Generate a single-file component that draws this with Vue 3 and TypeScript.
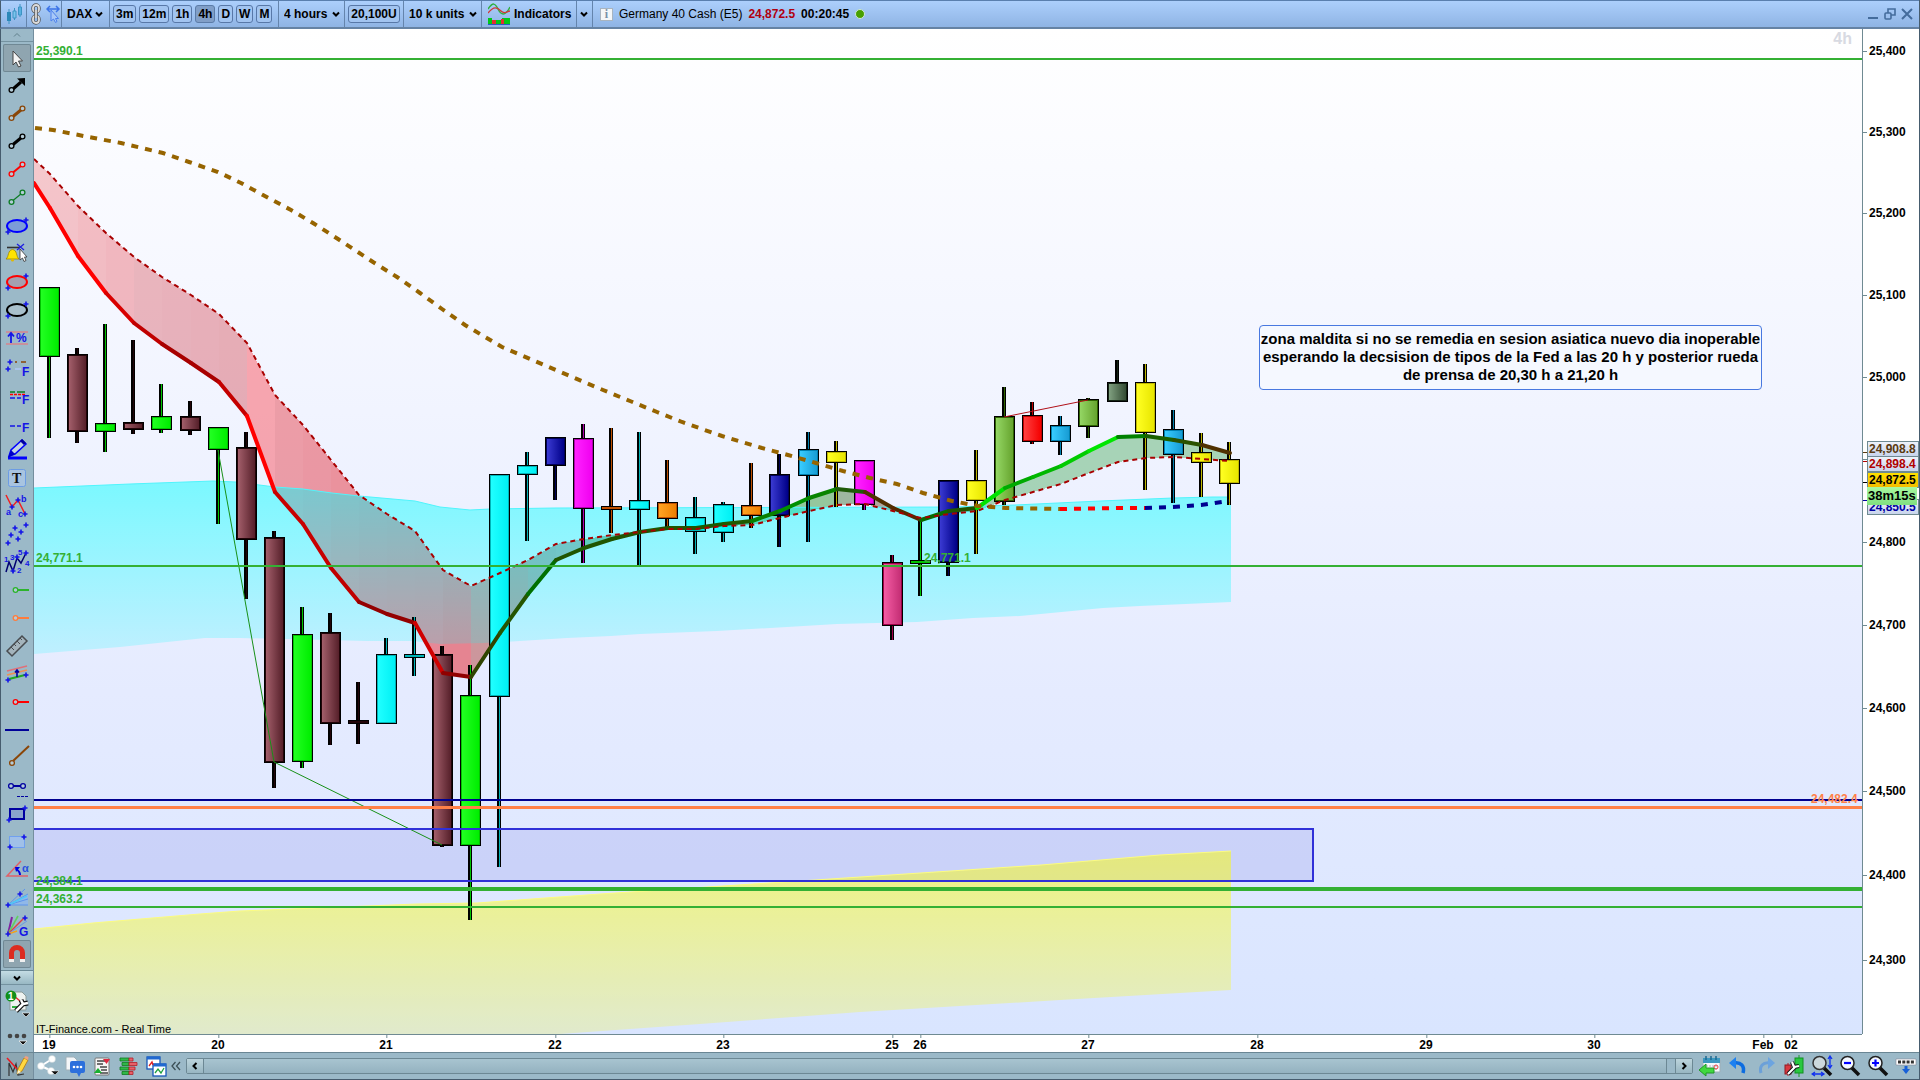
<script setup lang="ts">
import { ref } from 'vue'

type Point = [number, number]
interface Candle { kind: string; high: number; low: number; top: number; bottom: number; x: number }

/* Plot coordinates of the drawing surface */
const left = 34
const top = 29
const width = 1828
const height = 1005
const px = (x: number) => ((x - left) / width) * 100 + '%'
const py = (y: number) => ((y - top) / height) * 100 + '%'

const barX = (i: number) => Math.floor(49.6 + (i * 309) / 11)
const priceY = (p: number) => 51 + 20523 * Math.log(25400 / p)

const palette: Record<string, [string, string, string]> = {
  green: ['#22ff22', '#00ee00', '#00c400'],
  brown: ['#a25e6a', '#56202a', '#220408'],
  cyan: ['#20ffff', '#00f0f4', '#00b4b8'],
  blue: ['#3a3ad2', '#000088', '#000058'],
  magenta: ['#ff22ff', '#f000f0', '#b000b0'],
  orange: ['#ffa424', '#ee8000', '#c05000'],
  rust: ['#c85400', '#c05000', '#c05000'],
  sky: ['#38ccff', '#189cd4', '#0080b0'],
  yellow: ['#ffff22', '#e8e600', '#c0b800'],
  pink: ['#f45ca4', '#c42e74', '#a00048'],
  olive: ['#94d664', '#66a42e', '#2e6400'],
  red: ['#ff4040', '#f40000', '#c00000'],
  moss: ['#80a080', '#344c34', '#142414'],
}

const rows: [string, number, number, number, number][] = [
  ['green', 287, 438, 287, 357], ['brown', 348, 443, 354, 432], ['green', 324, 452, 423, 432],
  ['brown', 340, 434, 422, 430], ['green', 384, 433, 416, 430], ['brown', 401, 435, 416, 431],
  ['green', 427, 524, 427, 450], ['brown', 432, 599, 447, 540], ['brown', 531, 788, 537, 763],
  ['green', 607, 768, 634, 762], ['brown', 613, 745, 632, 724], ['brown', 682, 744, 720, 724],
  ['cyan', 638, 724, 654, 724], ['cyan', 617, 676, 654, 658], ['brown', 646, 847, 654, 846],
  ['green', 665, 920, 695, 846], ['cyan', 474, 867, 474, 697], ['cyan', 452, 541, 465, 475],
  ['blue', 437, 500, 437, 466], ['magenta', 424, 563, 438, 509], ['rust', 428, 533, 506, 510],
  ['cyan', 432, 565, 500, 510], ['orange', 460, 528, 502, 519], ['cyan', 497, 554, 517, 532],
  ['cyan', 502, 542, 504, 533], ['orange', 463, 528, 505, 516], ['blue', 454, 547, 474, 516],
  ['sky', 432, 542, 449, 476], ['yellow', 441, 507, 451, 463], ['magenta', 460, 510, 460, 505],
  ['pink', 555, 640, 562, 626], ['green', 520, 596, 560, 564], ['blue', 480, 576, 480, 563],
  ['yellow', 450, 554, 480, 501], ['olive', 387, 505, 416, 502], ['red', 402, 444, 415, 442],
  ['sky', 416, 455, 425, 442], ['olive', 398, 438, 399, 427], ['moss', 360, 402, 382, 402],
  ['yellow', 364, 490, 382, 433], ['sky', 410, 503, 429, 455], ['yellow', 433, 497, 452, 463],
  ['yellow', 442, 505, 459, 484],
]
const candles: Candle[] = rows.map(([kind, high, low, t, bottom], i) => ({
  kind, high, low, top: t, bottom, x: barX(i),
}))

/* Fast average: value at the left edge, then one per bar */
const fastY = [183, 208, 256, 293, 323, 344, 363, 382, 416, 492, 524, 568, 602, 614, 623, 673, 677, 633, 594,
  560, 548, 539, 532, 528, 528, 524, 521, 511, 498, 489, 492, 508, 520, 511, 508, 488, 477, 466, 451, 437, 436,
  440, 445, 453]
const slowY = [159, 174, 206, 233, 257, 277, 295, 314, 343, 395, 425, 460, 495, 514, 531, 570, 586, 573, 560,
  544, 539, 535, 532, 529, 529, 526, 525, 518, 511, 505, 504, 511, 518, 514, 511, 500, 492, 484, 473, 462, 458,
  457, 459, 461]
const tone = ['#f00', '#f00', '#f00', '#d80000', '#c00000', '#a80000', '#a80000', '#c40000', '#f00', '#c80000',
  '#c80000', '#c00000', '#940000', '#940000', '#d00000', '#900000', '#304400', '#255500', '#007000', '#205500',
  '#205500', '#205500', '#205500', '#205500', '#185c00', '#205a00', '#088000', '#009000', '#088400', '#1e5a08',
  '#503000', '#552800', '#086c00', '#205500', '#00e200', '#00aa00', '#00b800', '#00cc00', '#00e600', '#008000',
  '#1a6000', '#2a5200', '#503000']
const midX = (i: number) => (i === 0 ? left : barX(i - 1) + 1)
const segments = tone.map((color, i) => {
  const x1 = midX(i)
  const x2 = midX(i + 1)
  const rising = i > 33
  let fill = color
  if (i < 16) fill = '#e41018'
  if (i > 3 && i < 8) fill = '#cc1420'
  if (i === 8) fill = '#ff0c14'
  if (i === 16) fill = '#b03830'
  if (i === 17) fill = '#803828'
  if (i > 17 && i < 20) fill = '#604030'
  if (rising) fill = '#008c10'
  return {
    color, fill, x1, x2, y1: fastY[i], y2: fastY[i + 1],
    opacity: rising ? 0.3 : Math.min(0.48, 0.22 + ((fastY[i] - 180) / 500) * 0.26),
    area: `${x1},${fastY[i]} ${x2},${fastY[i + 1]} ${x2},${slowY[i + 1]} ${x1},${slowY[i]}`,
  }
})
const slowLine = slowY.map((y, i) => `${midX(i)},${y}`).join(' ')

const join = (pts: Point[]) => pts.map((p) => p.join(',')).join(' ')
const longAvg: Point[] = [[35, 128], [53, 130], [94, 138], [121, 143], [163, 153], [189, 162], [218, 172],
  [241, 183], [263, 195], [291, 210], [313, 223], [338, 239], [373, 262], [397, 277], [420, 293], [442, 309],
  [465, 325], [502, 347], [558, 371], [603, 390], [630, 401], [657, 412], [682, 422], [722, 436], [762, 448],
  [788, 455], [816, 463], [843, 471], [870, 478], [897, 484], [923, 493], [952, 501], [978, 506], [1006, 508],
  [1060, 509]]
const longRed: Point[] = [[1060, 509], [1117, 508], [1145, 508]]
const longBlue: Point[] = [[1145, 508], [1173, 507], [1201, 505], [1229, 501]]

const cyanTop: Point[] = [[34, 488], [130, 484], [213, 481], [236, 482], [275, 487], [303, 489], [332, 493],
  [359, 496], [415, 501], [440, 507], [470, 510], [490, 509], [555, 508], [953, 507], [1015, 505], [1100, 501],
  [1173, 498], [1213, 497], [1231, 497]]
const cyanBottom: Point[] = [[1231, 602], [1140, 606], [1103, 608], [1020, 616], [973, 618], [917, 622],
  [837, 624], [717, 631], [640, 634], [611, 636], [567, 638], [520, 641], [483, 643], [440, 644], [413, 641],
  [367, 641], [240, 638], [205, 638], [120, 647], [34, 654]]
const yellowTop: Point[] = [[34, 929], [93, 923], [200, 914], [240, 911], [317, 908], [417, 904], [477, 903],
  [600, 894], [800, 881], [1041, 865], [1160, 855], [1231, 851]]
const yellowBottom: Point[] = [[1231, 990], [1060, 1000], [860, 1012], [700, 1024], [560, 1034], [34, 1034]]

const levels = [
  { y: 59, w: 2, c: '#34b034' },
  { y: 566, w: 2, c: '#34b034' },
  { y: 800, w: 2, c: '#000090' },
  { y: 807.5, w: 3, c: '#ff8048' },
  { y: 889, w: 4, c: '#34b034' },
  { y: 907, w: 2, c: '#34b034' },
]
const levelLabels = [
  { t: '25,390.1', x: 36, y: 51, c: '#34b034' },
  { t: '24,771.1', x: 36, y: 558, c: '#34b034' },
  { t: '24,771.1', x: 924, y: 558, c: '#34b034' },
  { t: '24,384.1', x: 36, y: 881, c: '#34b034' },
  { t: '24,363.2', x: 36, y: 899, c: '#34b034' },
  { t: '24,482.4', x: 1811, y: 799, c: '#ff8048' },
]

const prices = [25400, 25300, 25200, 25100, 25000, 24800, 24700, 24600, 24500, 24400, 24300]
const marks = [
  { y: 452, c: '#5a3a10' }, { y: 459, c: '#6f8a92' }, { y: 461, c: '#b00000' },
  { y: 482, c: '#000000' }, { y: 500, c: '#0000a0' },
]
const tags = [
  { t: '24,850.5', y: 499, k: 'navy' },
  { t: '24,908.8', y: 441, k: 'sepia' },
  { t: '24,898.4', y: 456, k: 'crimson' },
  { t: '24,872.5', y: 472, k: 'last' },
  { t: '38m15s', y: 487, k: 'timer' },
]
const dates: [string, number][] = [['19', 49], ['20', 218], ['21', 386], ['22', 555], ['23', 723], ['25', 892],
  ['26', 920], ['27', 1088], ['28', 1257], ['29', 1426], ['30', 1594], ['Feb', 1763], ['02', 1791]]

const frames = ['3m', '12m', '1h', '4h', 'D', 'W', 'M']
const frame = ref('4h')

/* Drawing tools, each on a 28 × 28 grid */
const plus = (x: number, y: number, c = '#1414e6') =>
  `<path d="M${x - 2.5} ${y}h5M${x} ${y - 2.5}v5" stroke="${c}" stroke-width="1.6" fill="none"/>`
const link = (c: string, w: number) =>
  `<path d="M10 16.5L18.5 9.5" stroke="${c}" stroke-width="${w}"/><g fill="#b4ccd8" stroke="${c}" stroke-width="1.3"><circle cx="8.5" cy="18" r="2.4"/><circle cx="19.5" cy="8.5" r="2.4"/></g>`
const oval = (c: string, f: string) =>
  `<ellipse cx="14" cy="14" rx="10" ry="6" fill="${f}" stroke="${c}" stroke-width="2"/>${plus(23, 8)}${plus(5, 20)}`
const pin = (c: string) =>
  `<path d="M14.5 14H26" stroke="${c}" stroke-width="2"/><circle cx="12.5" cy="14" r="2.3" fill="#b4ccd8" stroke="${c}" stroke-width="1.3"/>`
const glyph = (x: number, y: number, s: number, t: string, c = '#1414e6') =>
  `<text x="${x}" y="${y}" font-size="${s}" font-weight="700" fill="${c}" font-family="Liberation Sans, Arial, sans-serif">${t}</text>`

const tools: { name: string; art: string }[] = [
  { name: 'Select', art: '<path d="M10 7V21L13 18L15.5 23L18 22L15.5 17H19.5Z" fill="#f4f4f4" stroke="#444" />' },
  { name: 'Arrow', art: '<path d="M10 17L18 10" stroke="#000" stroke-width="3"/><path d="M22 6V14L14 6.500Z" fill="#000"/><circle cx="8.5" cy="18" r="2.4" fill="#b4ccd8" stroke="#000" stroke-width="1.3"/>' },
  { name: 'Segment', art: link('#8a4608', 3) },
  { name: 'Black segment', art: link('#000', 3) },
  { name: 'Red segment', art: link('#f00', 2) },
  { name: 'Green segment', art: link('#0c7c24', 1.2) },
  { name: 'Blue ellipse', art: oval('#00f', '#7c9cd8') },
  { name: 'Alert', art: `<path d="M4 7.500H17" stroke="#333" stroke-width="1.600"/><path d="M14 4L21 10M21 4L14 10" stroke="#2020e0" stroke-width="1.300"/><path d="M3 19C6 17 4.500 10 9.500 9.500C14.500 10 13 17 16 19Z" fill="#ffe400" stroke="#a08800" stroke-width=".8"/><circle cx="9.500" cy="20" r="1.600" fill="#e0b800"/><path d="M17 9V20L19.500 18L21 21.500L23 20.500L21.500 17H24Z" fill="#fff" stroke="#333" stroke-width=".8"/>` },
  { name: 'Red ellipse', art: oval('#f00', '#a4a0b0') },
  { name: 'Black ellipse', art: oval('#000', '#a8c0cc') },
  { name: 'Percent change', art: `<path d="M3 8H25M3 20H25" stroke="#d8848c" stroke-width="1.500"/><path d="M8 19V10M5 12.500L8 9L11 12.500" stroke="#1414e6" stroke-width="1.800" fill="none"/>${glyph(13, 18, 12, '%')}` },
  { name: 'Fibonacci grid', art: `${plus(7, 10)}<path d="M12 10h2M18 10h5" stroke="#8a4608" stroke-width="1.500"/>${plus(5, 17)}<path d="M12 17h6" stroke="#b0c8f4" stroke-width="1.500"/>${glyph(19, 24, 12, 'F')}` },
  { name: 'Fibonacci levels', art: `<path d="M7 12h5M14 12h8" stroke="#0c7c24" stroke-width="1.500"/><path d="M7 14.500h15" stroke="#f00" stroke-width="1.500" stroke-dasharray="3 1"/><path d="M7 18h5M14 18h4" stroke="#1414e6" stroke-width="1.500"/>${glyph(19, 24, 12, 'F')}` },
  { name: 'Fibonacci line', art: `<path d="M7 18h5M14 18h4" stroke="#1414e6" stroke-width="1.500"/>${glyph(19, 24, 12, 'F')}` },
  { name: 'Freehand', art: '<path d="M5 22H24" stroke="#00f" stroke-width="3"/><path d="M6 20L8 14L19 4L23 8L12 18Z" fill="#c4d4e4" stroke="#00f" stroke-width="1.500"/><path d="M18 4L22 8" stroke="#0000a0" stroke-width="3"/><path d="M5 22L8 14L12 18Z" fill="#0000c8"/>' },
  { name: 'Text', art: `<rect x="5.500" y="5.500" width="17" height="17" rx="2" fill="#a8c4e0" stroke="#6c9ce4"/><text x="9" y="19" font-size="14" font-weight="700" fill="#111" font-family="Liberation Serif, serif">T</text>` },
  { name: 'ABC wave', art: `<path d="M3 3L9 15L15 8L22 22" stroke="#f02020" stroke-width="1.500" fill="none"/>${plus(9, 15)}${plus(15, 8)}${plus(22, 22)}${glyph(3, 23, 9, 'a')}${glyph(18, 10, 9, 'b')}${glyph(15, 25, 9, 'c')}` },
  { name: 'Polyline', art: `<path d="M5 22L8 15L15 19L12 7L18 11L23 4" stroke="#88b0e8" fill="none"/>${plus(5, 23)}${plus(8, 15)}${plus(15, 19)}${plus(12, 8)}${plus(18, 12)}${plus(23, 5)}` },
  { name: 'Elliott wave', art: `<path d="M3 24L6 14L10 23L14 10L18 15L23 5" stroke="#000070" stroke-width="1.500" fill="none"/>${plus(10, 23)}${plus(14, 9)}${plus(23, 5)}${glyph(1, 14, 8, '1')}${glyph(7, 12, 8, '3')}${glyph(15, 7, 8, '5')}${glyph(22, 18, 8, '4')}${glyph(14, 25, 8, '2')}` },
  { name: 'Green ray', art: pin('#2cb42c') },
  { name: 'Orange ray', art: pin('#ff7c3c') },
  { name: 'Ruler', art: '<path d="M4 19L19 4L24 9L9 24Z" fill="#a4b4bc" stroke="#484c50" stroke-width="1.500"/><path d="M8 15l3 3M11 12l2 2M14 9l3 3M17 6l2 2" stroke="#484c50"/>' },
  { name: 'Channel', art: `<path d="M4 11L24 6" stroke="#e07078" stroke-width="1.500"/><path d="M4 15L24 10" stroke="#f09050" stroke-width="1.500"/><path d="M6 19L22 15" stroke="#20a820" stroke-width="2"/>${plus(5, 20)}${plus(23, 15)}<path d="M14 17V11M12 12.500L14 10L16 12.500" stroke="#0000a0" stroke-width="1.600" fill="none"/>` },
  { name: 'Red ray', art: pin('#f00') },
  { name: 'Horizontal line', art: '<path d="M2 14H26" stroke="#000098" stroke-width="2"/>' },
  { name: 'Brown ray', art: '<path d="M10 17L26 2" stroke="#8a4608" stroke-width="2"/><circle cx="9" cy="19" r="2.400" fill="#b4ccd8" stroke="#8a4608" stroke-width="1.300"/>' },
  { name: 'Segment style', art: '<path d="M10 14H18" stroke="#0000a0" stroke-width="2"/><g fill="#b4ccd8" stroke="#0000a0" stroke-width="1.300"><circle cx="8" cy="14" r="2.400"/><circle cx="20" cy="14" r="2.400"/></g><path d="M14 24.500h3M18 24.500h3M22 24.500h3" stroke="#0000a0"/>' },
  { name: 'Rectangle', art: `<rect x="7" y="9" width="14" height="10" fill="#8aa4cc" stroke="#0000a0" stroke-width="2"/>${plus(22, 8)}${plus(6, 20)}` },
  { name: 'Light rectangle', art: `<rect x="6.500" y="8.500" width="15" height="11" fill="#a0c0e8" stroke="#70a0f0"/>${plus(21, 9)}${plus(7, 19)}` },
  { name: 'Angle', art: `<path d="M18 5L4 20H25" stroke="#e06068" stroke-width="1.500" fill="none"/><path d="M17 19C17 16 15.500 14.500 13 13" stroke="#0000e0" stroke-width="2" fill="none"/><path d="M12 11L17 11L13 16Z" fill="#0000e0"/>${glyph(19, 16, 11, 'α', '#2850e0')}` },
  { name: 'Fan', art: `<path d="M5 21L25 10V21Z" fill="#90b8e8"/><path d="M5 21L22 5M5 21L25 10M5 21L25 15M5 21H25" stroke="#5c94ec"/><path d="M5 21L24 12" stroke="#50c8f8" stroke-width="1.500"/>${plus(5, 21)}${plus(17, 10)}` },
  { name: 'Gann fan', art: `<path d="M5 22L9 5" stroke="#8020a0" stroke-width="2"/><path d="M5 22L15 4" stroke="#60d060" stroke-width="1.600"/><path d="M5 22L21 6" stroke="#e04040" stroke-width="1.500"/><path d="M5 22L24 9" stroke="#6898e8"/><path d="M5 22L14 19" stroke="#f0a020" stroke-width="1.500"/>${plus(5, 22)}${plus(22, 6)}${glyph(16, 24, 12, 'G')}` },
  { name: 'Magnet', art: '<path d="M8.500 19V13A5.500 5.500 0 0 1 19.500 13V19" stroke="#dc2c20" stroke-width="5" fill="none"/><path d="M6 19h5v3h-5zM17 19h5v3h-5z" fill="#f0f0f0"/>' },
]
</script>

<template>
  <div class="app">
    <header class="bar">
      <button class="cell logo" aria-label="Chart menu">
        <svg width="18" height="20" viewBox="0 0 18 20">
          <path d="M3 5v15M8.500 4v12M14 0v13" stroke="#3c94c4" />
          <path d="M1 8h4v9H1z" fill="#2c88b8" /><path d="M7 7h3v7H7z" fill="#7cc4ec" stroke="#3c94c4" /><path d="M12.500 3h3v8h-3z" fill="#58b0e0" stroke="#3c94c4" />
        </svg>
      </button>
      <div class="cell links">
        <button class="bare" aria-label="Link charts">
          <svg width="10" height="22" viewBox="0 0 10 22" fill="none">
            <g stroke="#555" stroke-width="3.400"><rect x="2" y="2" width="6" height="7" rx="3" /><rect x="2" y="13" width="6" height="7" rx="3" /></g>
            <g stroke="#ddd" stroke-width="1.800"><rect x="2" y="2" width="6" height="7" rx="3" /><rect x="2" y="13" width="6" height="7" rx="3" /></g>
            <path d="M5 7v8" stroke="#555" stroke-width="3.400" /><path d="M5 7v8" stroke="#eee" stroke-width="1.600" />
          </svg>
        </button>
        <button class="bare" aria-label="Move chart">
          <svg width="15" height="18" viewBox="0 0 15 18">
            <path d="M1 4h12M4 1L1 4l3 3M10 1l3 3-3 3" stroke="#3c74e8" stroke-width="1.500" fill="none" />
            <path d="M5 5v11l2.500-2 2 3.500 1.500-1-1.500-3h3z" fill="#a8c8f8" stroke="#4c80ec" />
          </svg>
        </button>
      </div>
      <label class="cell pick dax">
        <select aria-label="Instrument"><option>DAX</option></select>
        <svg class="chev" viewBox="0 0 8 6"><path d="M1 1.500L4 4.500 7 1.500" /></svg>
      </label>
      <div class="cell frames">
        <button v-for="f in frames" :key="f" class="key" :class="{ on: f === frame }" @click="frame = f">{{ f }}</button>
      </div>
      <label class="cell pick hours">
        <select aria-label="Time frame"><option>4 hours</option></select>
        <svg class="chev" viewBox="0 0 8 6"><path d="M1 1.500L4 4.500 7 1.500" /></svg>
      </label>
      <div class="cell units"><button class="key">20,100U</button></div>
      <label class="cell pick hist">
        <select aria-label="History"><option>10 k units</option></select>
        <svg class="chev" viewBox="0 0 8 6"><path d="M1 1.500L4 4.500 7 1.500" /></svg>
      </label>
      <button class="cell ind">
        <svg width="22" height="22" viewBox="0 0 22 22">
          <path d="M0 6C5-1 7 0 10 6S17 14 22 4" stroke="#30b040" stroke-width="1.500" fill="none" />
          <path d="M0 10C6 3 9 4 13 8S19 8 22 8" stroke="#d03838" stroke-width="1.300" fill="none" />
          <path d="M0 15h4v6H0zM8 17h5v4H8zM14 15h8v6h-8z" fill="#00c818" /><path d="M4 17h4v4H4zM13 16h3v5h-3z" fill="#e03030" /><path d="M0 21.500h22" stroke="#2858c8" />
        </svg>
        <span>Indicators</span>
      </button>
      <button class="cell more" aria-label="More indicators">
        <svg class="chev" viewBox="0 0 8 6"><path d="M1 1.500L4 4.500 7 1.500" /></svg>
      </button>
      <div class="title">
        <span class="info">i</span>
        <span>Germany 40 Cash (E5)</span>
        <b class="quote">24,872.5</b>
        <b>00:20:45</b>
        <i class="dot"></i>
      </div>
      <div class="win">
        <button class="bare" aria-label="Minimize"><svg width="12" height="12" viewBox="0 0 12 12"><path d="M1 10h10" stroke="#446c9c" stroke-width="2" /></svg></button>
        <button class="bare" aria-label="Restore"><svg width="12" height="12" viewBox="0 0 12 12" fill="none" stroke="#446c9c" stroke-width="1.600"><rect x="1" y="5" width="6" height="6" rx="1" /><path d="M4 5V1h7v6H7" /></svg></button>
        <button class="bare" aria-label="Close"><svg width="12" height="12" viewBox="0 0 12 12"><path d="M1 1l10 10M11 1L1 11" stroke="#446c9c" stroke-width="2" /></svg></button>
      </div>
    </header>

    <main class="body">
      <nav class="side">
        <button class="fold up" aria-label="Scroll up"><svg class="chev" viewBox="0 0 8 6"><path d="M1 4.500L4 1.500 7 4.500" /></svg></button>
        <div class="tools">
          <button v-for="(t, i) in tools" :key="t.name" class="tool" :class="{ on: i === 0 || i === 32 }" :aria-label="t.name">
            <svg width="28" height="28" viewBox="0 0 28 28" v-html="t.art"></svg>
          </button>
        </div>
        <button class="fold down" aria-label="Scroll down"><svg class="chev" viewBox="0 0 8 6"><path d="M1 1.500L4 4.500 7 1.500" /></svg></button>
        <button class="tool tall" aria-label="Object settings">
          <svg width="28" height="30" viewBox="0 0 28 30">
            <path d="M7 4h12l4 4v14H7z" fill="#eef2f0" stroke="#8a9a98" /><path d="M9 19h8" stroke="#30b040" stroke-width="2" /><path d="M11 8l6 5" stroke="#e03030" stroke-width="1.500" />
            <path d="M13 23l7-7M18 12l2 4 5-1" stroke="#111" stroke-width="5" fill="none" /><path d="M13 23l7-7M18 12l2 4 5-1" stroke="#fff" stroke-width="2.500" fill="none" />
            <circle cx="8" cy="8" r="5.500" fill="#109018" /><text x="5" y="12" font-size="10" font-weight="700" fill="#fff">1</text>
            <path d="M19 25h8l-4 4z" fill="#111" stroke="#fff" stroke-width=".6" />
          </svg>
        </button>
        <button class="tool tall" aria-label="More tools">
          <svg width="28" height="30" viewBox="0 0 28 30"><g fill="#444"><circle cx="7" cy="15" r="2.300" /><circle cx="14" cy="15" r="2.300" /><circle cx="21" cy="15" r="2.300" /></g><path d="M16 20h8l-4 4z" fill="#111" stroke="#fff" stroke-width=".7" /></svg>
        </button>
      </nav>

      <section class="chart">
        <div class="plot">
          <svg class="canvas" :viewBox="`${left} ${top} ${width} ${height}`" preserveAspectRatio="none">
            <defs>
              <linearGradient v-for="(c, k) in palette" :id="'c-' + k" :key="k" x1="0" y1="0" x2="1" y2="0">
                <stop offset="0" :stop-color="c[0]" /><stop offset="1" :stop-color="c[1]" />
              </linearGradient>
              <linearGradient id="aqua" gradientUnits="userSpaceOnUse" x1="0" y1="485" x2="0" y2="650">
                <stop offset="0" stop-color="#00ffff" stop-opacity=".48" /><stop offset="1" stop-color="#00ffff" stop-opacity=".18" />
              </linearGradient>
              <linearGradient id="lemon" gradientUnits="userSpaceOnUse" x1="0" y1="851" x2="0" y2="1034">
                <stop offset="0" stop-color="#ffff00" stop-opacity=".5" /><stop offset="1" stop-color="#ffff00" stop-opacity=".2" />
              </linearGradient>
            </defs>

            <rect x="30" y="829" width="1283" height="52" fill="#3c3cd0" fill-opacity=".12" />
            <polygon :points="join([...yellowTop, ...yellowBottom])" fill="url(#lemon)" />
            <polyline :points="join(yellowTop)" fill="none" stroke="#fcfc80" />
            <polygon v-for="(s, i) in segments" :key="'f' + i" :points="s.area" :fill="s.fill" :fill-opacity="s.opacity" shape-rendering="crispEdges" />
            <polygon :points="join([...cyanTop, ...cyanBottom])" fill="url(#aqua)" />
            <polyline :points="join(cyanTop)" fill="none" stroke="#50f4fc" />

            <g shape-rendering="crispEdges">
              <g v-for="(c, i) in candles" :key="'c' + i">
                <rect :x="c.x - 2" :y="c.high" width="4" :height="c.low - c.high" fill="#000" />
                <rect :x="c.x" :y="c.high" width="1" :height="c.low - c.high" :fill="palette[c.kind][2]" />
                <rect :x="c.x - 10" :y="c.top" width="21" :height="c.bottom - c.top" fill="#000" />
                <rect :x="c.x - 9" :y="c.top + 1" width="19" :height="c.bottom - c.top - 2" :fill="palette[c.kind][2]" />
                <rect v-if="c.bottom - c.top > 5" :x="c.x - 8" :y="c.top + 2" width="17" :height="c.bottom - c.top - 4" :fill="`url(#c-${c.kind})`" />
              </g>
            </g>

            <polyline points="218,450 274,762 442,845" fill="none" stroke="#189018" />
            <polyline points="1004,417 1088,400" fill="none" stroke="#b01018" />

            <g stroke-width="4" stroke-linecap="round">
              <line v-for="(s, i) in segments" :key="'l' + i" :x1="s.x1" :y1="s.y1" :x2="s.x2" :y2="s.y2" :stroke="s.color" />
            </g>
            <polyline :points="slowLine" fill="none" stroke="#a80000" stroke-width="2" stroke-dasharray="5 4" />
            <g fill="none" stroke-width="4" stroke-dasharray="7 7">
              <polyline :points="join(longAvg)" stroke="#966400" />
              <polyline :points="join(longRed)" stroke="#f00" />
              <polyline :points="join(longBlue)" stroke="#000090" />
            </g>

            <rect x="30" y="829" width="1283" height="52" fill="none" stroke="#3030d8" stroke-width="2" />
            <line v-for="l in levels" :key="l.y" x1="34" x2="1862" :y1="l.y" :y2="l.y" :stroke="l.c" :stroke-width="l.w" />
          </svg>

          <span v-for="(l, i) in levelLabels" :key="i" class="level" :style="{ left: px(l.x), top: py(l.y), color: l.c }">{{ l.t }}</span>
          <p class="note" :style="{ left: px(1259), top: py(325) }">zona maldita si no se remedia en sesion asiatica nuevo dia inoperable<br />esperando la decsision de tipos de la Fed a las 20 h y posterior rueda<br />de prensa de 20,30 h a 21,20 h</p>
          <span class="watermark">4h</span>
          <span class="source">IT-Finance.com - Real Time</span>
        </div>

        <div class="prices">
          <span v-for="p in prices" :key="p" class="price" :style="{ top: py(priceY(p)) }">{{ p.toLocaleString('en-US') }}</span>
          <i v-for="m in marks" :key="m.y" class="mark" :style="{ top: py(m.y), background: m.c }"></i>
          <span v-for="t in tags" :key="t.t" class="tag" :class="t.k" :style="{ top: py(t.y) }">{{ t.t }}</span>
        </div>

        <div class="dates">
          <span v-for="d in dates" :key="d[0]" class="date" :style="{ left: px(d[1]) }">{{ d[0] }}</span>
        </div>
      </section>
    </main>

    <footer class="foot">
      <button class="fbtn pencil" aria-label="Drawing tools">
        <svg width="24" height="24" viewBox="0 0 24 24"><path d="M4 22V9l4 9 3-8 2 11 6-1" stroke="#333" stroke-width="1.200" fill="none" /><path d="M2 4l10 11" stroke="#f01820" stroke-width="1.500" /><path d="M12 20l1-5 6-11 4 2-6 11z" fill="#ffd840" stroke="#b07810" stroke-width=".8" /><path d="M12 20l1-4 3 2z" fill="#fff4d0" /><path d="M19 4l4 2 .5-3-3-1z" fill="#f0a080" /></svg>
      </button>
      <div class="group">
        <button class="fbtn" aria-label="Share">
          <svg width="22" height="22" viewBox="0 0 22 22"><path d="M15 4L4 11l11 5" stroke="#fff" stroke-width="2" fill="none" /><g fill="#fff" stroke="#c0ccd0" stroke-width=".5"><circle cx="15" cy="4" r="3.500" /><circle cx="4" cy="11" r="3.500" /><circle cx="14" cy="16" r="3.500" /></g><path d="M14 16h8l-4 4z" fill="#111" stroke="#fff" stroke-width=".5" /></svg>
        </button>
        <button class="fbtn" aria-label="Comments">
          <svg width="22" height="22" viewBox="0 0 22 22"><path d="M2 2h8l3 3v10H2z" fill="#f4f6f8" stroke="#a0b0b8" /><path d="M8 6h11q2 0 2 2v8q0 2-2 2h-2l-2 4-2-4H8q-2 0-2-2V8q0-2 2-2z" fill="#2c70dc" /><g fill="#fff"><circle cx="10" cy="12" r="1.300" /><circle cx="13.500" cy="12" r="1.300" /><circle cx="17" cy="12" r="1.300" /></g></svg>
        </button>
        <button class="fbtn" aria-label="Report">
          <svg width="22" height="22" viewBox="0 0 22 22"><rect x="4" y="3" width="14" height="17" rx="1" fill="#f4f4f4" stroke="#777" /><path d="M6 6h8M6 9h6M9 12h7M10 15h6M9 18h8" stroke="#444" stroke-width="1.500" /><path d="M12 4h7l-3.500 5z" fill="#e02840" /><path d="M3 18l4-5 4 5z" fill="#18b030" /></svg>
        </button>
        <button class="fbtn" aria-label="Order book">
          <svg width="22" height="22" viewBox="0 0 22 22"><path d="M2 3h9v3H2zM4 7.500h7v3H4zM2 12h9v3H2zM4 16.500h7v3H4z" fill="#30b848" stroke="#107c20" stroke-width=".8" /><path d="M11 3h4v3h-4zM11 7.500h8v3h-8zM11 12h6v3h-6zM11 16.500h4v3h-4z" fill="#e86068" stroke="#b02028" stroke-width=".8" /></svg>
        </button>
        <button class="fbtn" aria-label="Windows">
          <svg width="22" height="22" viewBox="0 0 22 22"><g fill="#fff" stroke="#1858b8" stroke-width="1.300"><rect x="2" y="2" width="13" height="12" /><rect x="8" y="9" width="13" height="12" /></g><path d="M2 3h13M8 10h13" stroke="#2068d0" stroke-width="3" /><path d="M4 11l3-4 1 3" stroke="#e02020" fill="none" stroke-width="1.300" /><path d="M10 18l3-4 3 4 3-5" stroke="#20a040" fill="none" stroke-width="1.300" /></svg>
        </button>
      </div>
      <button class="bare fast" aria-label="Collapse"><svg width="10" height="10" viewBox="0 0 10 10"><path d="M4.500 1l-3.500 4 3.500 4M9 1L5.500 5 9 9" stroke="#3c5058" stroke-width="1.300" fill="none" /></svg></button>
      <div class="scroll">
        <button class="step" aria-label="Scroll left"><svg width="6" height="8" viewBox="0 0 6 8"><path d="M4.500 1L1.500 4l3 3" /></svg></button>
        <div class="thumb"></div>
        <div class="gap"></div>
        <button class="step end" aria-label="Scroll right"><svg width="6" height="8" viewBox="0 0 6 8"><path d="M1.500 1l3 3-3 3" /></svg></button>
      </div>
      <div class="right">
        <button class="fbtn" aria-label="Go to date">
          <svg width="24" height="22" viewBox="0 0 24 22"><path d="M5 5h17v12H5z" fill="#f4f8fc" stroke="#a0b0b8" /><path d="M5 3h17v5H5z" fill="#3c98c0" /><path d="M8 1v4M13 1v4M18 1v4" stroke="#1c6890" stroke-width="1.500" /><path d="M8 11h12M8 14h12" stroke="#a8b8c0" stroke-dasharray="2 1" /><circle cx="18" cy="12" r="2" fill="none" stroke="#e84040" /><path d="M1 15l7-6v4h8v5H8v3z" fill="#40d840" stroke="#209828" /></svg>
        </button>
        <button class="fbtn" aria-label="Undo">
          <svg width="22" height="22" viewBox="0 0 22 22"><path d="M7 8c7-1 11 3 9 10" stroke="#0c6ce0" stroke-width="3.500" fill="none" /><path d="M2 8l7-6v12z" fill="#1c80f0" /></svg>
        </button>
        <button class="fbtn" aria-label="Redo">
          <svg width="22" height="22" viewBox="0 0 22 22"><path d="M15 8c-7-1-11 3-9 10" stroke="#6ca0d8" stroke-width="3" fill="none" /><path d="M20 8l-7-6v12z" fill="#6ca4e0" /></svg>
        </button>
        <button class="fbtn" aria-label="Chart settings">
          <svg width="22" height="22" viewBox="0 0 22 22"><path d="M5 8v13" stroke="#b02028" /><rect x="2" y="10" width="6" height="9" fill="#d83840" stroke="#901820" /><path d="M16 0v22" stroke="#18a028" /><rect x="12" y="3" width="8" height="15" fill="#28c840" stroke="#109020" /><g fill="none" stroke-linejoin="round"><path d="M5 19l7-7M9 7l2 5 5-1" stroke="#111" stroke-width="4" /><path d="M5 19l7-7M9 7l2 5 5-1" stroke="#fff" stroke-width="2.200" /></g></svg>
        </button>
        <button class="fbtn" aria-label="Zoom axes">
          <svg width="22" height="22" viewBox="0 0 22 22"><path d="M13 13l7 7" stroke="#111" stroke-width="3.500" /><circle cx="8.500" cy="8" r="6.500" fill="#ccd8dc" stroke="#333" stroke-width="1.500" /><path d="M19 2v10M17 4l2-3 2 3M17 10l2 3 2-3M2 19h10M4 17l-3 2 3 2M10 17l3 2-3 2" stroke="#1030f0" stroke-width="1.300" fill="none" /></svg>
        </button>
        <button class="fbtn" aria-label="Zoom out">
          <svg width="22" height="22" viewBox="0 0 22 22"><path d="M12 12l8 8" stroke="#111" stroke-width="3.500" /><circle cx="8.500" cy="8" r="6.500" fill="#f4f8ff" stroke="#222" stroke-width="1.500" /><path d="M5 8h7" stroke="#00f" stroke-width="2.200" /></svg>
        </button>
        <button class="fbtn" aria-label="Zoom in">
          <svg width="22" height="22" viewBox="0 0 22 22"><path d="M12 12l8 8" stroke="#111" stroke-width="3.500" /><circle cx="8.500" cy="8" r="6.500" fill="#f4f8ff" stroke="#222" stroke-width="1.500" /><path d="M5 8h7M8.500 4.500v7" stroke="#00f" stroke-width="2.200" /></svg>
        </button>
        <button class="fbtn" aria-label="Hide keyboard">
          <svg width="22" height="22" viewBox="0 0 22 22"><path d="M1 4h20v6H1z" fill="#fff" stroke="#889" stroke-width=".6" /><path d="M3 7h16" stroke="#333" stroke-width="3" stroke-dasharray="3 1.300" /><path d="M11 11v4" stroke="#1860d8" stroke-width="3" /><path d="M7 14h8l-4 5z" fill="#1860d8" /></svg>
        </button>
      </div>
    </footer>
  </div>
</template>

<style>
body {
  margin: 0;
}
</style>

<style scoped>
.app {
  display: flex;
  flex-direction: column;
  height: 100vh;
  min-height: 720px;
  border-right: 1px solid #465c6e;
  font: 12px/14px "Liberation Sans", Arial, sans-serif;
  color: #000;
  background: #9bb9c8;
  overflow: hidden;
}
.app *,
.app {
  box-sizing: border-box;
}
button,
select {
  font: inherit;
  font-weight: 700;
  color: inherit;
  border: 0;
  padding: 0;
  margin: 0;
  background: none;
  border-radius: 0;
}
svg {
  display: block;
  flex: none;
}
.bare {
  display: flex;
}
.chev {
  width: 8px;
  height: 6px;
  fill: none;
  stroke: #000;
  stroke-width: 2;
  pointer-events: none;
}

/* Top toolbar */
.bar {
  display: flex;
  flex: none;
  height: 29px;
  border-top: 1px solid #5a7fae;
  border-bottom: 2px solid #6683a4;
  border-left: 1px solid #465c6e;
  background: linear-gradient(#accffc, #8fb4e4);
}
.bar .cell {
  display: flex;
  align-items: center;
  border-right: 1px solid #6484ac;
}
.logo {
  width: 26px;
  padding-left: 5px;
}
.links {
  width: 35px;
  padding-left: 4px;
  gap: 5px;
}
.pick {
  justify-content: space-between;
  padding: 0 4px 0 5px;
}
.pick select {
  appearance: none;
  font-weight: 700;
  outline: 0;
}
.dax {
  width: 48px;
  padding-right: 6px;
}
.hours {
  width: 66px;
}
.hist {
  width: 78px;
}
.frames {
  width: 169px;
  padding-left: 3px;
  gap: 3px;
}
.key {
  height: 18px;
  padding: 0 2px;
  border: 1px solid #5878a8;
  border-radius: 3px;
  background: #a2c4f0;
}
.key.on {
  background: #819fc8;
  border-color: #5c7ca8;
}
.units {
  width: 59px;
  justify-content: center;
}
.ind {
  width: 95px;
  padding-left: 6px;
  gap: 4px;
}
.more {
  width: 16px;
  padding-left: 3px;
}
.title {
  display: flex;
  flex: 1;
  align-items: center;
  gap: 6px;
  padding-left: 7px;
}
.info {
  width: 13px;
  height: 13px;
  border: 1px solid #a8b4c0;
  background: #f4f6f8;
  color: #7890a8;
  font: bold 12px/11px "Liberation Serif", serif;
  text-align: center;
}
.quote {
  color: #b00010;
}
.dot {
  width: 10px;
  height: 10px;
  border: 1px solid #d0e8d8;
  border-radius: 50%;
  background: #48a000;
}
.win {
  display: flex;
  align-items: center;
  gap: 5px;
  padding-right: 6px;
}

/* Drawing tool column */
.body {
  display: flex;
  flex: 1;
  min-height: 0;
}
.side {
  display: flex;
  flex: none;
  flex-direction: column;
  width: 34px;
  border-left: 1px solid #465c6e;
  border-right: 1px solid #748e9e;
  overflow: hidden;
}
.fold {
  display: flex;
  flex: none;
  align-items: center;
  justify-content: center;
  height: 13px;
  border-bottom: 1px solid #7492a0;
}
.fold.up .chev {
  stroke: #60808c;
  stroke-width: 1;
}
.fold.down {
  height: 15px;
  border-top: 1px solid #6a8896;
  background: linear-gradient(#c4dce4, #98b8c4);
}
.tools {
  display: flex;
  flex-direction: column;
  padding: 2px 0 2px 2px;
  min-height: 0;
  overflow: hidden;
}
.tool {
  flex: none;
  width: 28px;
  height: 28px;
  border-radius: 2px;
}
.tool.on {
  background: #8fa5b0;
  box-shadow: inset 0 0 0 1px #708894;
}
.tool.tall {
  height: 30px;
  margin: 3px 0 0 2px;
}

/* Chart */
.chart {
  display: grid;
  flex: 1;
  grid-template: minmax(0, 1fr) 18px / minmax(0, 1fr) 57px;
  min-width: 0;
  background: #fff;
}
.plot {
  position: relative;
  overflow: hidden;
  background: linear-gradient(#fff, #f1f4ff 38%, #e5ebff 66%, #d9e5ff);
}
.canvas {
  width: 100%;
  height: 100%;
}
.level {
  position: absolute;
  font-weight: 700;
  transform: translateY(-50%);
}
.note {
  position: absolute;
  width: 503px;
  margin: 0;
  padding: 4px 0 5px;
  border: 1px solid #4878e0;
  border-radius: 4px;
  background: #f5f8ff;
  font: bold 15px/18px "Liberation Sans", Arial, sans-serif;
  text-align: center;
  white-space: nowrap;
}
.watermark {
  position: absolute;
  top: 0;
  right: 10px;
  font: bold 16px/20px "Liberation Sans", Arial, sans-serif;
  color: #d8dae2;
}
.source {
  position: absolute;
  left: 2px;
  bottom: 0;
  font-size: 11px;
  line-height: 10px;
}
.prices {
  position: relative;
  border-left: 1px solid #6f8a92;
}
.price {
  position: absolute;
  left: 6px;
  font-weight: 700;
  transform: translateY(-50%);
}
.price::before {
  content: "";
  position: absolute;
  left: -6px;
  top: 7px;
  width: 4px;
  height: 1px;
  background: #6f8a92;
}
.mark {
  position: absolute;
  left: 0;
  width: 4px;
  height: 1px;
}
.tag {
  position: absolute;
  left: 4px;
  right: 0;
  height: 16px;
  padding-left: 1px;
  border: 1px solid #6f8a92;
  background: linear-gradient(#eef2fa, #c8d4ec);
  font-weight: 700;
}
.sepia {
  color: #5a3a10;
}
.crimson {
  color: #b00000;
}
.navy {
  color: #0000a0;
}
.last {
  background: linear-gradient(#ffe000, #f4bc00);
}
.tag.timer {
  right: 2px;
  height: 18px;
  border: 0;
  padding-left: 1px;
  background: linear-gradient(#a8f8a0, #80e080);
  font-size: 13px;
  line-height: 18px;
}
.dates {
  position: relative;
  border-top: 1px solid #6f8a92;
}
.date {
  position: absolute;
  top: 3px;
  font-weight: 700;
  transform: translateX(-50%);
}
.date::before {
  content: "";
  position: absolute;
  left: 50%;
  top: -3px;
  width: 1px;
  height: 3px;
  background: #6f8a92;
}

/* Bottom bar */
.foot {
  display: flex;
  flex: none;
  align-items: center;
  height: 28px;
  border-top: 1px solid #6a8694;
  border-bottom: 1px solid #465c6e;
  border-left: 1px solid #465c6e;
}
.fbtn {
  display: flex;
  align-items: center;
  justify-content: center;
  width: 27px;
  height: 26px;
}
.pencil {
  width: 33px;
  background: #8ca6b2;
  border-right: 1px solid #748e9e;
}
.group {
  display: flex;
}
.fast {
  margin: 0 5px 0 2px;
}
.scroll {
  display: flex;
  flex: 1;
  height: 16px;
  border: 1px solid #6c8894;
  border-radius: 2px;
}
.step {
  display: flex;
  align-items: center;
  justify-content: center;
  width: 17px;
  border-right: 1px solid #6c8894;
  background: linear-gradient(#bcd4dc, #98b6c2);
}
.step.end {
  border-right: 0;
  border-left: 1px solid #6c8894;
}
.step path {
  fill: none;
  stroke: #000;
  stroke-width: 2;
}
.thumb {
  flex: 1;
  border-right: 1px solid #6c8894;
  background: linear-gradient(#a8c4d0, #94b2c0);
}
.gap {
  width: 8px;
}
.right {
  display: flex;
  gap: 1px;
  padding-left: 3px;
}
</style>
